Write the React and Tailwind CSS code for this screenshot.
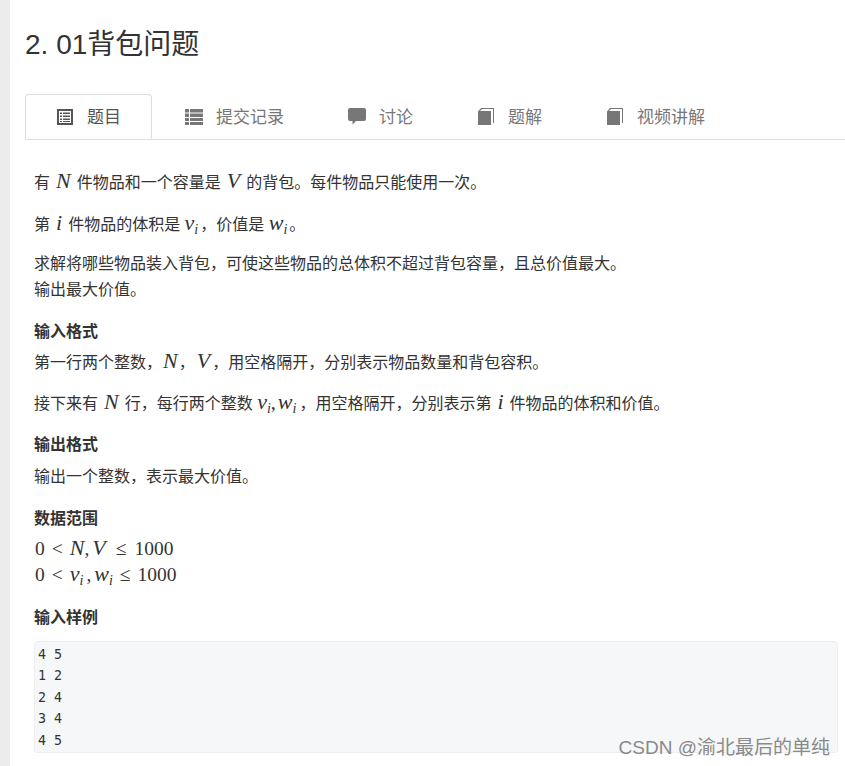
const cjk = '"Liberation Sans","Noto Sans CJK SC",sans-serif';

const M = ({ children, className = "mx-[6px]" }) => (
  <span className={`font-['Liberation_Serif',serif] italic text-[22px] leading-none text-[#333] ${className}`}>{children}</span>
);

const Sub = ({ v, s, className = "" }) => (
  <span className={`font-['Liberation_Serif',serif] italic text-[22px] leading-none ${className}`}>
    {v}
    <sub className="text-[14px] leading-none">{s}</sub>
  </span>
);

const Op = ({ children, className = "mx-[7px]" }) => (
  <span className={className}>{children}</span>
);

const ListAlt = () => (
  <svg width="16" height="16" viewBox="0 0 16 16" fill="#555">
    <path fillRule="evenodd" d="M0 0h16v16H0zM2 2v12h12V2z" />
    <path d="M3 3.500h2v1.500H3zM6 3.500h7v1.500H6zM3 6.500h2V8H3zM6 6.500h7V8H6zM3 9.500h2V11H3zM6 9.500h7V11H6zM3 12h2v1H3zM6 12h7v1H6z" />
  </svg>
);

const ThList = () => (
  <svg width="18" height="16" viewBox="0 0 18 16" fill="#777">
    <path d="M0 0h4v3.500H0zM5 0h13v3.500H5zM0 4.500h4V8H0zM5 4.500h13V8H5zM0 9h4v3H0zM5 9h13v3H5zM0 13h4v3H0zM5 13h13v3H5z" />
  </svg>
);

const Comment = () => (
  <svg width="18" height="17" viewBox="0 0 18 17" fill="#777">
    <path d="M2 0h14a2 2 0 0 1 2 2v9a2 2 0 0 1-2 2H8l-3.500 3.500V13H2a2 2 0 0 1-2-2V2a2 2 0 0 1 2-2z" />
  </svg>
);

const Book = () => (
  <svg width="16" height="17" viewBox="0 0 16 17" fill="#777">
    <path d="M0 3.500 3 0h13v15h-1V1H4L2 3h11v14H0z" />
  </svg>
);

const Tab = ({ icon, label, active, className = "" }) => (
  <div
    className={
      "flex h-[45px] items-center gap-[13px] text-[17px] " +
      (active
        ? "-mb-px border border-b-white border-[#ddd] rounded-t-[4px] bg-white text-[#555] w-[127px] pl-[29px] "
        : "text-[#777] ") +
      className
    }
  >
    <span className="w-[19px] flex justify-center shrink-0">{icon}</span>
    <span className="pt-[2px]">{label}</span>
  </div>
);

export default function App() {
  return (
    <div className="flex h-[766px] w-[845px] overflow-hidden bg-white text-[#333]" style={{ fontFamily: cjk }}>
      <div className="w-[10px] shrink-0 bg-[#ececec]" />
      <div className="relative flex-1 pl-[15px]">
        <h1 className="pt-[26px] text-[28px] leading-[38px] font-normal text-[#333]">2. 01背包问题</h1>

        <div className="mt-[30px] flex border-b border-[#ddd]">
          <Tab active icon={<ListAlt />} label="题目" />
          <Tab className="ml-[32px]" icon={<ThList />} label="提交记录" />
          <Tab className="ml-[63px]" icon={<Comment />} label="讨论" />
          <Tab className="ml-[63px]" icon={<Book />} label="题解" />
          <Tab className="ml-[63px]" icon={<Book />} label="视频讲解" />
        </div>

        <div className="pl-[9px] pr-[7px] pt-[30px] text-[16px] leading-[26px]">
          <p>有<M>N</M>件物品和一个容量是<M>V</M>的背包。每件物品只能使用一次。</p>
          <p className="mt-[16px]">第<M>i</M>件物品的体积是 <Sub v="v" s="i" className="mr-[2px]" />，价值是 <Sub v="w" s="i" className="mr-[2px]" />。</p>
          <p className="mt-[13px]">求解将哪些物品装入背包，可使这些物品的总体积不超过背包容量，且总价值最大。</p>
          <p>输出最大价值。</p>

          <h2 className="mt-[16px] text-[16px] font-bold">输入格式</h2>
          <p className="mt-[5px]">第一行两个整数，<M className="mx-[1px]">N</M>，<M className="mx-[2px]">V</M>，用空格隔开，分别表示物品数量和背包容积。</p>
          <p className="mt-[15px]">接下来有<M>N</M>行，每行两个整数 <Sub v="v" s="i" /><span className="font-['Liberation_Serif',serif] text-[20px] leading-none mr-[2px]">,</span><Sub v="w" s="i" className="mr-[3px]" />，用空格隔开，分别表示第<M>i</M>件物品的体积和价值。</p>

          <h2 className="mt-[15px] text-[16px] font-bold">输出格式</h2>
          <p className="mt-[6px]">输出一个整数，表示最大价值。</p>

          <h2 className="mt-[16px] text-[16px] font-bold">数据范围</h2>
          <div className="mt-[4px] pl-px font-['Liberation_Serif',serif] text-[19.500px]">
            <div>0<Op>&lt;</Op><M className="">N</M><Op className="mr-[3px]">,</Op><M className="">V</M><Op className="ml-[10px] mr-[8px]">≤</Op>1000</div>
            <div>0<Op>&lt;</Op><Sub v="v" s="i" /><Op className="mx-[3px]">,</Op><Sub v="w" s="i" /><Op>≤</Op>1000</div>
          </div>

          <h2 className="mt-[17px] text-[16px] font-bold">输入样例</h2>

          <pre className="mt-[10px] h-[112px] rounded-[3px] border border-[#eeeeee] bg-[#f6f7f9] px-[3px] pt-[2px] font-['DejaVu_Sans_Mono',monospace] text-[13.300px] leading-[21.400px] text-[#333]">{`4 5
1 2
2 4
3 4
4 5`}</pre>
        </div>

        <div className="absolute bottom-[6px] right-[15px] text-[19px] leading-[24px] text-[#8a8a8a]">CSDN @渝北最后的单纯</div>
      </div>
    </div>
  );
}
